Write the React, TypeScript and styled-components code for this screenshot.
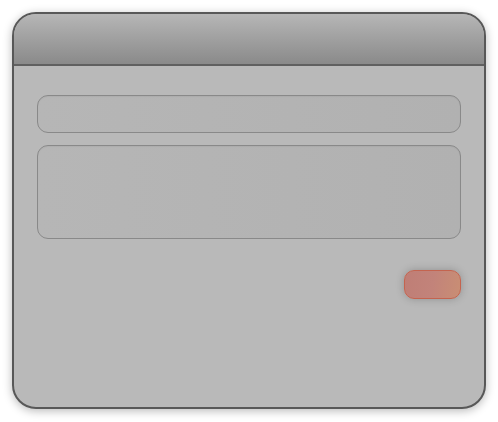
import React from "react";
import styled, { createGlobalStyle } from "styled-components";

const Global = createGlobalStyle`
  html, body { margin: 0; padding: 0; background: #ffffff; }
  body { font-family: "Liberation Sans", Arial, sans-serif; }
`;

const Page = styled.div`
  padding: 12px 12px 12px 12px;
`;

const Window = styled.div`
  width: 470px;
  height: 393px;
  border: 2px solid #585858;
  border-radius: 24px;
  background: #b9b9b9;
  box-shadow: 0 2px 10px rgba(0, 0, 0, 0.28);
  overflow: hidden;
  display: flex;
  flex-direction: column;
`;

const TitleBar = styled.div`
  height: 50px;
  flex: none;
  background: linear-gradient(to bottom, #b6b6b6 0%, #a2a2a2 45%, #8a8a8a 100%);
  border-bottom: 2px solid #606060;
`;

const Body = styled.div`
  padding: 29px 23px 0 23px;
  display: flex;
  flex-direction: column;
  gap: 12px;
`;

const Field = styled.div<{ $h: number }>`
  height: ${(p) => p.$h}px;
  box-sizing: border-box;
  border: 1px solid #898989;
  border-radius: 11px;
  background: linear-gradient(to right, #b6b6b6, #b1b1b1);
  box-shadow: inset 0 1px 1px rgba(0, 0, 0, 0.04);
`;

const Actions = styled.div`
  display: flex;
  justify-content: flex-end;
  margin-top: 19px;
`;

const Button = styled.button`
  width: 57px;
  height: 29px;
  box-sizing: border-box;
  border: 1px solid #c4644f;
  border-radius: 10px;
  background: linear-gradient(100deg, #bf7e76 0%, #c2837a 50%, #c98e74 100%);
  box-shadow: 0 0 9px rgba(0, 0, 0, 0.22);
  padding: 0;
  cursor: pointer;
`;

export default function App() {
  return (
    <Page>
      <Global />
      <Window>
        <TitleBar />
        <Body>
          <Field $h={38} />
          <Field $h={94} />
          <Actions>
            <Button aria-label="submit" />
          </Actions>
        </Body>
      </Window>
    </Page>
  );
}
